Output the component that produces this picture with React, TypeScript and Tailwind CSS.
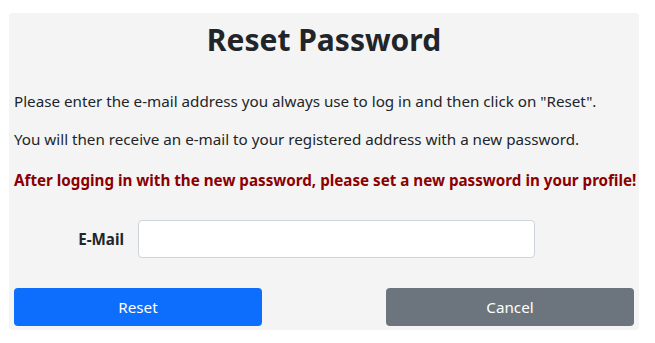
export default function App() {
  return (
    <div className="min-h-screen bg-white pl-[9px] pt-[13px] font-['Noto_Sans',sans-serif] text-[#212529]">
      <div className="w-[630px] rounded bg-[#f4f4f4] px-[5px] pb-[4px] pt-[8px]">
        <h1 className="text-center text-[30px] font-bold leading-[38px]">
          Reset Password
        </h1>
        <p className="mt-[30px] text-[15.2px] leading-[24px]">
          Please enter the e-mail address you always use to log in and then
          click on "Reset".
        </p>
        <p className="mt-[14px] text-[15.2px] leading-[24px]">
          You will then receive an e-mail to your registered address with a new
          password.
        </p>
        <p className="mt-[17px] whitespace-nowrap text-[15.2px] font-bold leading-[24px] text-[#8b0000]">
          After logging in with the new password, please set a new password in
          your profile!
        </p>
        <div className="mt-[28px] flex items-center">
          <label className="w-[124px] pr-[14px] text-right text-[15.2px] font-bold">
            E-Mail
          </label>
          <input
            type="email"
            className="h-[38px] w-[397px] rounded-[4px] border border-[#ced4da] bg-white px-3 outline-none"
          />
        </div>
        <div className="mt-[30px] flex justify-between">
          <button className="h-[38px] w-[248px] rounded-[4px] bg-[#0d6efd] text-[15.2px] text-white">
            Reset
          </button>
          <button className="h-[38px] w-[248px] rounded-[4px] bg-[#6c757d] text-[15.2px] text-white">
            Cancel
          </button>
        </div>
      </div>
    </div>
  );
}
